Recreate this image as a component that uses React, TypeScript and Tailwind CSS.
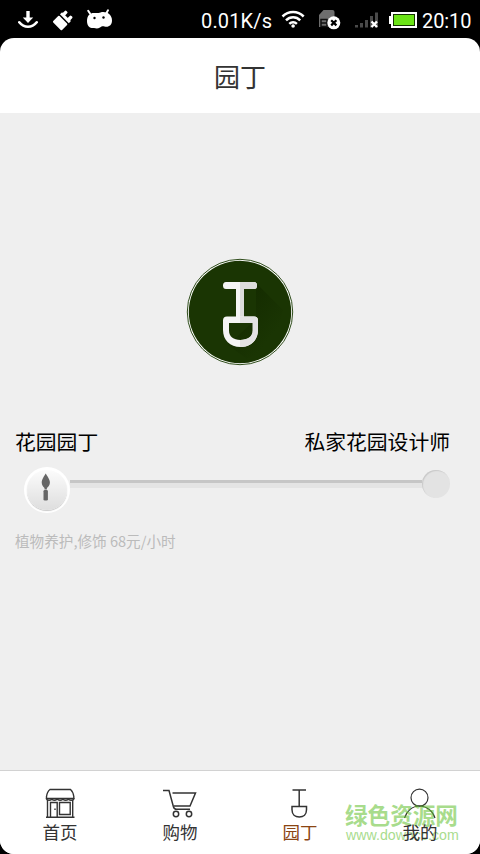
import type { ReactNode } from "react";
import clsx from "clsx";

const StatusBar = () => {
  return (
    <div className="flex h-[38px] shrink-0 items-center justify-between bg-black pl-[18px] pr-[9px] text-white">
      <svg width="96" height="38" viewBox="18 0 96 38" fill="none">
        <path d="M28 11v9" stroke="#fff" strokeWidth="3.4" />
        <path d="M22.8 17.5h10.4L28 23z" fill="#fff" />
        <path
          d="M19.3 22.3c4.8 6 12.6 6 17.4 0"
          stroke="#fff"
          strokeWidth="2.6"
          strokeLinecap="round"
        />
        <g transform="rotate(45 63.5 20)" fill="#fff">
          <rect x="57" y="20" width="12.5" height="9" rx="1" />
          <rect x="57" y="15.5" width="12.5" height="3" />
          <rect x="58" y="11.5" width="3.4" height="5" rx="1.2" />
          <rect x="65" y="11.5" width="3.4" height="5" rx="1.2" />
        </g>
        <path
          d="M90 13.5l-1.8-2.7M106.5 13l1.5-2.7"
          stroke="#fff"
          strokeWidth="2"
          strokeLinecap="round"
        />
        <path
          d="M87 21c0-6 3.500-8.500 8-8 2.500.3 3.500 0 5.500-.6 6-1.500 11.500 2.200 11.500 8 0 5-3.500 7-7.500 6-2-.5-3 0-4.500 1-2 1.500-4 1.200-6 .6-3.500.6-7-1.500-7-7z"
          fill="#fff"
        />
        <circle cx="94.500" cy="18" r="1.200" fill="#000" />
        <circle cx="103.500" cy="17.500" r="1.200" fill="#000" />
      </svg>
      <div className="flex items-center">
        <span className="w-[80px] whitespace-nowrap pt-[3px] font-[Roboto,sans-serif] text-[20px] leading-[38px] tracking-[0.15px]">
          0.01K/s
        </span>
        <svg width="139" height="38" viewBox="281 0 139 38" fill="none">
          <g stroke="#fff" strokeWidth="2.500">
            <path d="M282.500 16.500c6-6 15.200-6 21.200 0" />
            <path d="M286 20.300c4-4 10.200-4 14.200 0" />
            <path d="M289.300 23.800c2.200-2 5.400-2 7.600 0" />
          </g>
          <circle cx="293.100" cy="26" r="1.800" fill="#fff" />
          <path d="M319 15l4.500-5h9q2 0 2 2v15H319z" fill="#6e6e6e" />
          <path
            d="M321 19.500h6v7h-6zM321 23h6M329 19.500h5"
            stroke="#111"
            strokeWidth="1.500"
          />
          <circle cx="333.800" cy="22.800" r="6.500" fill="#fff" />
          <path
            d="M331.200 20.200l5.200 5.200M336.400 20.200l-5.200 5.200"
            stroke="#000"
            strokeWidth="2.200"
          />
          <path
            d="M355 25h3v2.500h-3zM360 23h3v4.500h-3zM365 20h3v7.500h-3zM370 16h3v11.500h-3zM375 12.500h3v15h-3z"
            fill="#4a4a4a"
          />
          <path
            d="M371.500 21.500l5.500 5.500M377 21.500l-5.500 5.500"
            stroke="#fff"
            strokeWidth="2.400"
          />
          <path d="M391 12h26v16h-26v-4h-2v-8h2z" fill="#fff" />
          <path d="M393 14h22v12h-22z" fill="#153500" />
          <path d="M394 15h20v10h-20z" fill="#6be416" />
        </svg>
        <span className="w-[51px] whitespace-nowrap pl-[2px] pt-[4px] font-[Roboto,sans-serif] text-[20px] leading-[38px] tracking-[-0.1px]">
          20:10
        </span>
      </div>
    </div>
  );
};

const GardenerBadge = () => {
  return (
    <svg width="108" height="108" viewBox="0 0 108 108" fill="none">
      <defs>
        <linearGradient id="shade" x1="50" y1="45" x2="88" y2="75" gradientUnits="userSpaceOnUse">
          <stop stopColor="#142b00" />
          <stop offset="1" stopColor="#1a3503" />
        </linearGradient>
      </defs>
      <circle cx="54" cy="54" r="52.700" fill="#fff" stroke="#2c4a18" strokeWidth="1" />
      <circle cx="54" cy="54" r="51.200" fill="#1a3503" />
      <path d="M70 25l27 27-8 34-28 15-19-14 28-26z" fill="url(#shade)" />
      <path d="M40 24h28q3 0 3 3.500T68 31H58v28h-8V31H40q-3 0-3-3.500t3-3.500z" fill="#f5f5f5" />
      <path
        fillRule="evenodd"
        d="M41 58.500h27q4 0 4 4V72c0 10-7 17-17.500 17S37 82 37 72v-9.500q0-4 4-4zM43 65v7.500c0 6 4.500 9.500 11.500 9.500S67 78.500 67 72.500V65z"
        fill="#f5f5f5"
      />
      <path d="M54 24h14q3 0 3 3.500T68 31H58v27.500h-4z" fill="#dcdcdc" />
      <path
        d="M54 58.500h14q4 0 4 4V72c0 10-7 17-18 17v-7c8 0 12.500-3.500 12.500-9.500V65H54z"
        fill="#e3e3e3"
      />
    </svg>
  );
};

const LevelSlider = () => {
  return (
    <div className="mt-[8px] flex h-[54px] items-start pl-[9px] pr-[15px]">
      <div className="flex size-[46px] shrink-0 items-center justify-center rounded-full bg-white">
        <div className="flex size-[40px] items-center justify-center rounded-full bg-linear-to-b from-[#fcfcfc] to-[#dedede] shadow-[0_1px_1px_#c8c8c8]">
          <svg width="40" height="40" viewBox="0 0 40 40" fill="#666">
            <path d="M18.700 3.500c-1 2-4 5.500-4 9 0 2.500 1.500 4.500 2.800 5.500v1.500h2.400V18c1.500-1 3-3 3-5.500 0-3.500-3.200-7-4.200-9z" />
            <rect x="16.500" y="20" width="4.400" height="10.500" rx="1.300" />
          </svg>
        </div>
      </div>
      <div className="mt-[13px] h-[8px] grow border-t-[3px] border-[#c6c6c6] bg-[#e4e4e4]" />
      <div className="mt-[3px] size-[28px] shrink-0 rounded-full bg-[#e3e3e3] shadow-[inset_1px_1px_1px_#c9c9c9]" />
    </div>
  );
};

const HomeIcon = () => (
  <svg width="32" height="32" viewBox="0 0 32 32" fill="none" stroke="#333" strokeWidth="1.400">
    <path d="M6 2.500h20.500q2.500 2 3.300 7v2H2.500v-2q.8-5 3.500-7z" />
    <path d="M2.500 11c0 3 5.300 3 5.300 0 0 3 5.600 3 5.600 0 0 3 5.500 3 5.500 0 0 3 5.500 3 5.500 0 0 3 5.500 3 5.500 0" />
    <path d="M3.500 13v17M28.700 13v17M2 30.300h28.500M6.500 30V15.500h6.700V30M15.500 15.500h10.700v12H15.500z" />
    <path d="M11 21.500v1.500" />
  </svg>
);

const CartIcon = () => (
  <svg width="36" height="32" viewBox="0 0 36 32" fill="none" stroke="#333" strokeWidth="1.500">
    <path d="M1 3.500h6L11.500 20q.7 2.300 3 2.300H28" />
    <path d="M10.500 6H33.500L28 19H12" />
    <circle cx="14" cy="27" r="2.700" />
    <circle cx="27" cy="27" r="2.700" />
  </svg>
);

const SpadeIcon = () => (
  <svg width="32" height="32" viewBox="0 0 32 32" fill="none" stroke="#333" strokeWidth="1.500">
    <path d="M8.500 3h13.500M15.200 3v16.500" />
    <path d="M8 19.500h14.500v3.300c0 4.500-3 7.200-7.200 7.200S8 27.300 8 22.800z" />
  </svg>
);

const UserIcon = () => (
  <svg width="34" height="32" viewBox="0 0 34 32" fill="none" stroke="#333" strokeWidth="1.200">
    <circle cx="16.500" cy="10.700" r="8.500" />
    <path d="M1.500 31c2-7 8-12 15-12s13.500 5 15.500 12" />
  </svg>
);

interface TabProps {
  icon: ReactNode;
  label: string;
  active?: boolean;
}

const Tab = ({ icon, label, active }: TabProps) => {
  return (
    <div className="flex w-[120px] flex-col items-center pt-[16px]">
      {icon}
      <span
        className={clsx(
          "relative z-10 text-[17.5px] leading-[26px]",
          active ? "text-[#8b4513]" : "text-[#333]"
        )}
      >
        {label}
      </span>
    </div>
  );
};

const App = () => {
  return (
    <div className="flex h-[854px] w-[480px] flex-col overflow-hidden bg-black font-['Noto_Sans_CJK_SC',sans-serif]">
      <StatusBar />
      <div className="flex grow flex-col overflow-hidden rounded-[14px] bg-white">
        <header className="flex h-[75px] shrink-0 items-center justify-center text-[26px] text-[#333]">
          园丁
        </header>

        <main className="flex grow flex-col bg-[#efefef] px-[15px]">
          <div className="mt-[145px] flex h-[108px] justify-center">
            <GardenerBadge />
          </div>
          <div className="mt-[59px] flex h-[34px] items-center justify-between pr-[15px] text-[20.8px] text-black">
            <span>花园园丁</span>
            <span>私家花园设计师</span>
          </div>
          <LevelSlider />
          <p className="mt-[8px] text-[14.6px] leading-[24px] text-[#bbb]">
            植物养护,修饰 68元/小时
          </p>
        </main>

        <nav className="relative flex h-[84px] shrink-0 border-t border-[#d2d2d2] bg-white">
          <Tab icon={<HomeIcon />} label="首页" />
          <Tab icon={<CartIcon />} label="购物" />
          <Tab icon={<SpadeIcon />} label="园丁" active />
          <Tab icon={<UserIcon />} label="我的" />
          <div className="absolute left-[345px] top-[31px] whitespace-nowrap text-[#61c02e] opacity-55">
            <div className="text-[22.6px] font-bold leading-[26px]">绿色资源网</div>
            <div className="pl-[1px] font-['Liberation_Sans',sans-serif] text-[14.2px] leading-[14px]">
              www.downcc.com
            </div>
          </div>
        </nav>
      </div>
    </div>
  );
};

export default App;
